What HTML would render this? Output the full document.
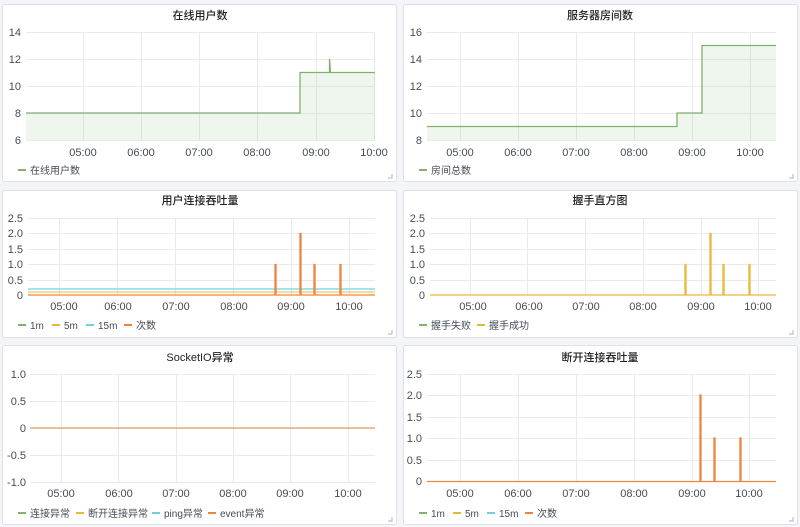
<!DOCTYPE html>
<html><head><meta charset="utf-8"><style>
html,body{margin:0;padding:0;background:#f4f5f8;width:800px;height:527px;overflow:hidden}
svg{display:block;font-family:"Liberation Sans","Noto Sans CJK SC",sans-serif}
.p{fill:#fff;stroke:#dfe1e6;stroke-width:1}
.t{font-size:11px;fill:#222;text-anchor:middle;font-weight:500}
.y{font-size:11px;fill:#464c54;text-anchor:end}
.x{font-size:11px;fill:#464c54;text-anchor:middle}
.l{font-size:10px;fill:#464c54}
.g{stroke:#e9eaec;stroke-width:1}
.c{stroke:#b0b3b8;stroke-width:1;fill:none}
</style></head><body>
<svg width="800" height="527" viewBox="0 0 800 527">
<rect class="p" x="2.5" y="4.5" width="394" height="177" rx="2"/>
<rect class="p" x="403.5" y="4.5" width="394" height="177" rx="2"/>
<rect class="p" x="2.5" y="190.5" width="394" height="147" rx="2"/>
<rect class="p" x="403.5" y="190.5" width="394" height="147" rx="2"/>
<rect class="p" x="2.5" y="345.5" width="394" height="179" rx="2"/>
<rect class="p" x="403.5" y="345.5" width="394" height="179" rx="2"/>
<g class="c"><path d="M388 178h4v-4"/><path d="M789 178h4v-4"/><path d="M388 334h4v-4"/><path d="M789 334h4v-4"/><path d="M388 521h4v-4"/><path d="M789 521h4v-4"/></g>

<text class="t" x="200" y="19">在线用户数</text>
<g class="g"><path d="M26 32.5H375M26 59.5H375M26 86.5H375M26 113.5H375M26 140.5H375"/><path d="M83.5 32V140M141.5 32V140M199.5 32V140M257.5 32V140M316.5 32V140M374.5 32V140"/></g>
<g class="y"><text x="21" y="36">14</text><text x="21" y="63">12</text><text x="21" y="90">10</text><text x="21" y="117">8</text><text x="21" y="144">6</text></g>
<g class="x"><text x="83" y="156">05:00</text><text x="141" y="156">06:00</text><text x="199" y="156">07:00</text><text x="257" y="156">08:00</text><text x="316" y="156">09:00</text><text x="374" y="156">10:00</text></g>
<path d="M26 113H300V72.5H329.5V59L330.5 72.5H375V140H26Z" fill="#7eb26d" fill-opacity="0.12"/>
<path d="M26 113H300V72.5H329.5V59L330.5 72.5H375" fill="none" stroke="#7eb26d" stroke-width="1.3"/>
<rect x="18" y="169" width="8" height="2" fill="#7eb26d"/><text class="l" x="30" y="174">在线用户数</text>

<text class="t" x="600" y="19">服务器房间数</text>
<g class="g"><path d="M427 32.5H776M427 59.5H776M427 86.5H776M427 113.5H776M427 140.5H776"/><path d="M460.5 32V140M518.5 32V140M576.5 32V140M634.5 32V140M692.5 32V140M750.5 32V140"/></g>
<g class="y"><text x="422" y="36">16</text><text x="422" y="63">14</text><text x="422" y="90">12</text><text x="422" y="117">10</text><text x="422" y="144">8</text></g>
<g class="x"><text x="460" y="156">05:00</text><text x="518" y="156">06:00</text><text x="576" y="156">07:00</text><text x="634" y="156">08:00</text><text x="692" y="156">09:00</text><text x="750" y="156">10:00</text></g>
<path d="M427 126.5H677V113H702V45.5H776V140H427Z" fill="#7eb26d" fill-opacity="0.12"/>
<path d="M427 126.5H677V113H702V45.5H776" fill="none" stroke="#7eb26d" stroke-width="1.3"/>
<rect x="419" y="169" width="8" height="2" fill="#7eb26d"/><text class="l" x="431" y="174">房间总数</text>

<text class="t" x="200" y="204">用户连接吞吐量</text>
<g class="g"><path d="M28 218.5H375M28 233.5H375M28 249.5H375M28 264.5H375M28 280.5H375"/><path d="M59.5 218V295M117.5 218V295M175.5 218V295M233.5 218V295M291.5 218V295M349.5 218V295"/></g>
<g class="y"><text x="23" y="222">2.5</text><text x="23" y="237">2.0</text><text x="23" y="253">1.5</text><text x="23" y="268">1.0</text><text x="23" y="284">0.5</text><text x="23" y="299">0</text></g>
<g class="x"><text x="64" y="310">05:00</text><text x="118" y="310">06:00</text><text x="176" y="310">07:00</text><text x="234" y="310">08:00</text><text x="291" y="310">09:00</text><text x="349" y="310">10:00</text></g>
<path d="M28 289H375" stroke="#6ed0e0" stroke-width="1.3"/>
<path d="M28 292H375" stroke="#eab839" stroke-width="1"/>
<path d="M28 295H275V264.5H276V295H300V233.5H301V295H314V264.5H315V295H340V264.5H341V295H375" fill="none" stroke="#ef843c" stroke-width="1.3"/>
<rect x="18" y="324" width="8" height="2" fill="#7eb26d"/><text class="l" x="30" y="329">1m</text>
<rect x="52" y="324" width="8" height="2" fill="#eab839"/><text class="l" x="64" y="329">5m</text>
<rect x="86" y="324" width="8" height="2" fill="#6ed0e0"/><text class="l" x="98" y="329">15m</text>
<rect x="124" y="324" width="8" height="2" fill="#ef843c"/><text class="l" x="136" y="329">次数</text>

<text class="t" x="600" y="204">握手直方图</text>
<g class="g"><path d="M430 218.5H776M430 233.5H776M430 249.5H776M430 264.5H776M430 280.5H776"/><path d="M470.5 218V295M527.5 218V295M585.5 218V295M643.5 218V295M701.5 218V295M758.5 218V295"/></g>
<g class="y"><text x="425" y="222">2.5</text><text x="425" y="237">2.0</text><text x="425" y="253">1.5</text><text x="425" y="268">1.0</text><text x="425" y="284">0.5</text><text x="425" y="299">0</text></g>
<g class="x"><text x="473" y="310">05:00</text><text x="529" y="310">06:00</text><text x="586" y="310">07:00</text><text x="643" y="310">08:00</text><text x="701" y="310">09:00</text><text x="758" y="310">10:00</text></g>
<path d="M430 295H685V264.5H686V295H710V233.5H711V295H723V264.5H724V295H749V264.5H750V295H776" fill="none" stroke="#eab839" stroke-width="1.3"/>
<rect x="419" y="324" width="8" height="2" fill="#7eb26d"/><text class="l" x="431" y="329">握手失败</text>
<rect x="477" y="324" width="8" height="2" fill="#eab839"/><text class="l" x="489" y="329">握手成功</text>

<text class="t" x="200" y="361">SocketIO异常</text>
<g class="g"><path d="M30 374.5H375M30 401.5H375M30 428.5H375M30 455.5H375M30 482.5H375"/><path d="M61.5 374V482M118.5 374V482M176.5 374V482M233.5 374V482M290.5 374V482M348.5 374V482"/></g>
<g class="y"><text x="26" y="378">1.0</text><text x="26" y="405">0.5</text><text x="26" y="432">0</text><text x="26" y="459">-0.5</text><text x="26" y="486">-1.0</text></g>
<g class="x"><text x="61" y="497">05:00</text><text x="119" y="497">06:00</text><text x="176" y="497">07:00</text><text x="233" y="497">08:00</text><text x="290" y="497">09:00</text><text x="348" y="497">10:00</text></g>
<path d="M30 428H375" stroke="#ef843c" stroke-width="1.3" stroke-opacity="0.8"/>
<rect x="18" y="512" width="8" height="2" fill="#7eb26d"/><text class="l" x="30" y="517">连接异常</text>
<rect x="76" y="512" width="8" height="2" fill="#eab839"/><text class="l" x="88" y="517">断开连接异常</text>
<rect x="152" y="512" width="8" height="2" fill="#6ed0e0"/><text class="l" x="164" y="517">ping异常</text>
<rect x="208" y="512" width="8" height="2" fill="#ef843c"/><text class="l" x="220" y="517">event异常</text>

<text class="t" x="600" y="361">断开连接吞吐量</text>
<g class="g"><path d="M427 374.5H776M427 395.5H776M427 417.5H776M427 438.5H776M427 460.5H776"/><path d="M460.5 374V481M518.5 374V481M576.5 374V481M634.5 374V481M692.5 374V481M749.5 374V481"/></g>
<g class="y"><text x="422" y="378">2.5</text><text x="422" y="399">2.0</text><text x="422" y="421">1.5</text><text x="422" y="442">1.0</text><text x="422" y="464">0.5</text><text x="422" y="485">0</text></g>
<g class="x"><text x="460" y="497">05:00</text><text x="518" y="497">06:00</text><text x="576" y="497">07:00</text><text x="634" y="497">08:00</text><text x="692" y="497">09:00</text><text x="749" y="497">10:00</text></g>
<path d="M427 481.5H700V395H701V481.5H714V438H715V481.5H740V438H741V481.5H776" fill="none" stroke="#ef843c" stroke-width="1.3"/>
<rect x="419" y="512" width="8" height="2" fill="#7eb26d"/><text class="l" x="431" y="517">1m</text>
<rect x="453" y="512" width="8" height="2" fill="#eab839"/><text class="l" x="465" y="517">5m</text>
<rect x="487" y="512" width="8" height="2" fill="#6ed0e0"/><text class="l" x="499" y="517">15m</text>
<rect x="525" y="512" width="8" height="2" fill="#ef843c"/><text class="l" x="537" y="517">次数</text>
</svg>
</body></html>
